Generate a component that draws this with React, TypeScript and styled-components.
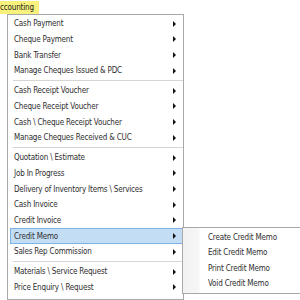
import React from 'react';
import styled, { createGlobalStyle } from 'styled-components';

const GlobalStyle = createGlobalStyle`
  html, body {
    margin: 0;
    padding: 0;
    background: #ffffff;
    overflow: hidden;
  }
  body {
    font-family: 'DejaVu Sans Condensed', 'DejaVu Sans', sans-serif;
    font-stretch: condensed;
    font-size: 8px;
    letter-spacing: -0.18px;
    color: #2e2e2e;
  }
`;

const ROW_H = 15.67;

const Page = styled.div`
  position: relative;
  width: 300px;
  height: 300px;
`;

const MenuBar = styled.div`
  display: flex;
  align-items: flex-end;
  height: 14px;
`;

const BarLabel = styled.div`
  height: 13px;
  line-height: 13px;
  padding: 0 5px 0 0;
  background: #f8f27c;
  color: #222;
`;

const Dropdown = styled.div`
  position: absolute;
  left: 7px;
  top: 14px;
  width: 175px;
  padding: 1px 0 4px;
  background: #ffffff;
  border: 1px solid #a8a8a8;
`;

const Row = styled.div<{ $active?: boolean }>`
  position: relative;
  display: flex;
  align-items: center;
  box-sizing: border-box;
  height: ${ROW_H}px;
  margin-left: 2px;
  padding-left: 3px;
  border: 1px solid ${(p) => (p.$active ? '#7db2e6' : 'transparent')};
  background: ${(p) => (p.$active ? '#c3ddf4' : 'transparent')};
  white-space: nowrap;
`;

const Label = styled.span`
  flex: 1;
`;

const Arrow = styled.span`
  width: 0;
  height: 0;
  margin-right: 6px;
  border-left: 3px solid #111;
  border-top: 3px solid transparent;
  border-bottom: 3px solid transparent;
`;

const Separator = styled.div`
  display: flex;
  align-items: center;
  height: 4.33px;
  margin-left: 5px;
  &::after {
    content: '';
    flex: 1;
    height: 1px;
    background: #d6d6d6;
    box-shadow: 0 1px 0 #ffffff;
  }
`;

const SubMenu = styled.div`
  position: absolute;
  left: 100%;
  top: -2px;
  width: 150px;
  padding: 1px 0;
  border: 1px solid #a8a8a8;
  background: linear-gradient(to right, #f2f2f2 0, #f6f6f6 16px, #ffffff 17px);
`;

const SubRow = styled.div`
  display: flex;
  align-items: center;
  height: ${ROW_H}px;
  padding-left: 25px;
  white-space: nowrap;
`;

const groups: string[][] = [
  ['Cash Payment', 'Cheque Payment', 'Bank Transfer', 'Manage Cheques Issued & PDC'],
  [
    'Cash Receipt Voucher',
    'Cheque Receipt Voucher',
    'Cash \\ Cheque Receipt Voucher',
    'Manage Cheques Received & CUC',
  ],
  [
    'Quotation \\ Estimate',
    'Job In Progress',
    'Delivery of Inventory Items \\ Services',
    'Cash Invoice',
    'Credit Invoice',
    'Credit Memo',
    'Sales Rep Commission',
  ],
  ['Materials \\ Service Request', 'Price Enquiry \\ Request'],
];

const subItems = ['Create Credit Memo', 'Edit Credit Memo', 'Print Credit Memo', 'Void Credit Memo'];

const App: React.FC = () => {
  const active = 'Credit Memo';

  return (
    <Page>
      <GlobalStyle />
      <MenuBar>
        <BarLabel>ccounting</BarLabel>
      </MenuBar>
      <Dropdown>
        {groups.map((group, gi) => (
          <React.Fragment key={gi}>
            {gi > 0 && <Separator />}
            {group.map((item) => (
              <Row key={item} $active={item === active}>
                <Label>{item}</Label>
                <Arrow />
                {item === active && (
                  <SubMenu>
                    {subItems.map((s) => (
                      <SubRow key={s}>{s}</SubRow>
                    ))}
                  </SubMenu>
                )}
              </Row>
            ))}
          </React.Fragment>
        ))}
      </Dropdown>
    </Page>
  );
};

export default App;
